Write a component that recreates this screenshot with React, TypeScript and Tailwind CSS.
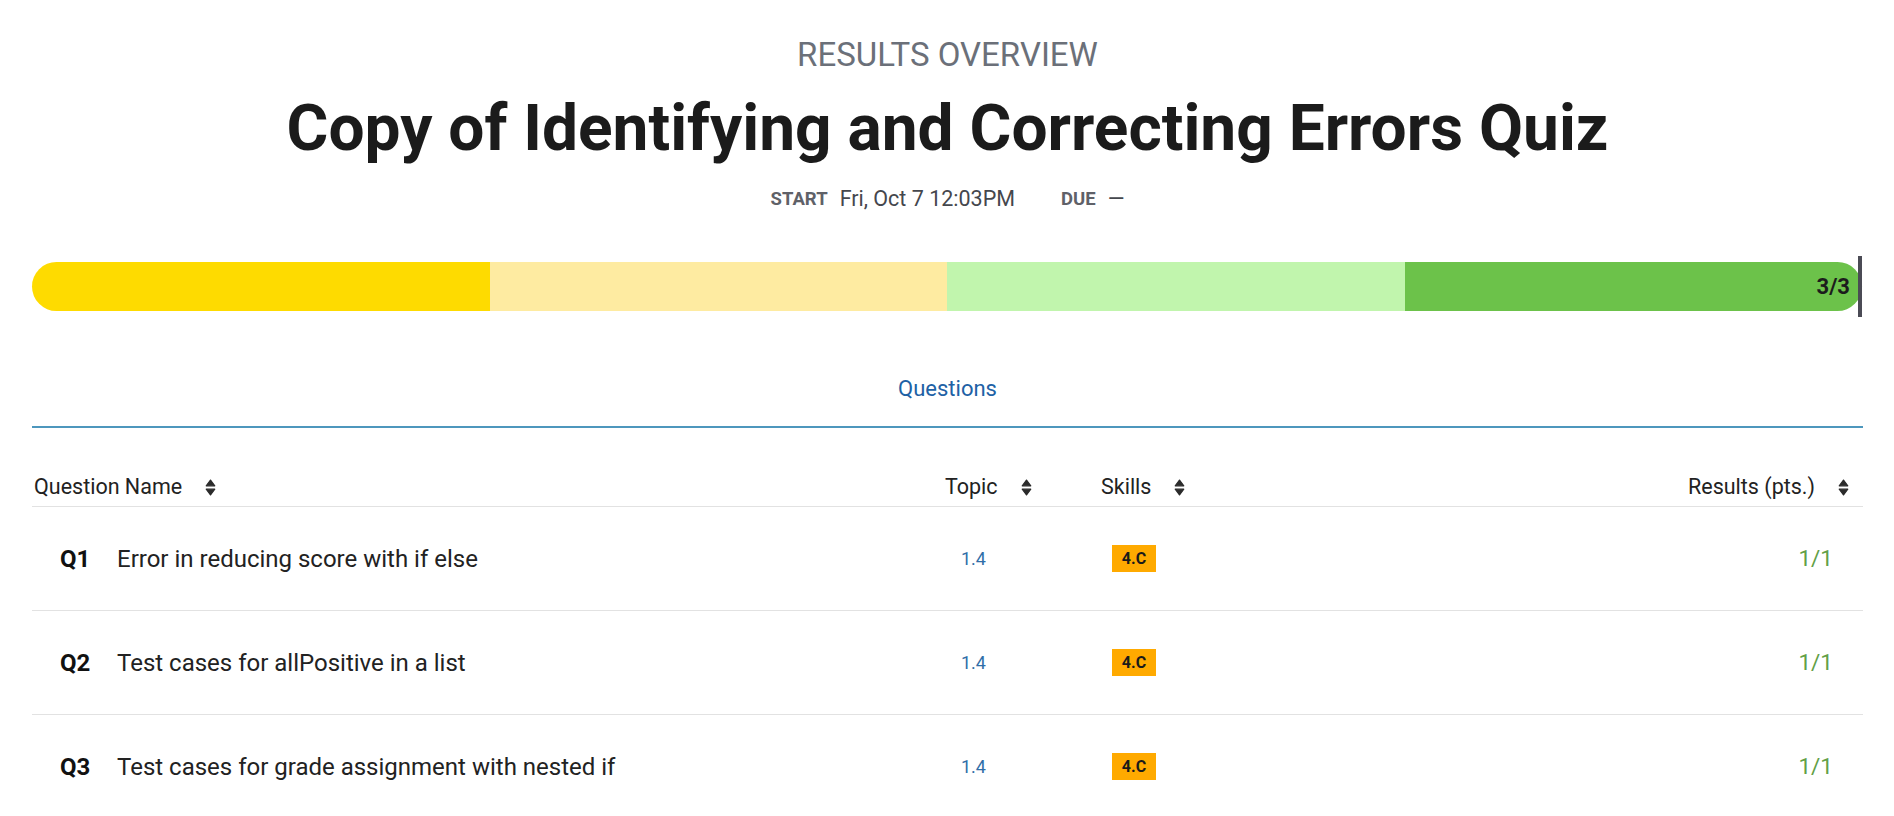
import type { ReactNode } from 'react'

type Row = {
  id: string
  title: string
  topic: string
  skill: string
  result: string
}

const ROWS: Row[] = [
  { id: 'Q1', title: 'Error in reducing score with if else', topic: '1.4', skill: '4.C', result: '1/1' },
  { id: 'Q2', title: 'Test cases for allPositive in a list', topic: '1.4', skill: '4.C', result: '1/1' },
  { id: 'Q3', title: 'Test cases for grade assignment with nested if', topic: '1.4', skill: '4.C', result: '1/1' },
]

const SEGMENTS = ['bg-[#fedb00] rounded-l-full', 'bg-[#feeba1]', 'bg-[#c1f5ad]', 'bg-[#6cc24a] rounded-r-full']

function SortIcon() {
  return (
    <svg viewBox="0 0 10 16" className="h-[17px] w-[11px] text-[#2b2b2b]" fill="currentColor" stroke="currentColor" strokeWidth="1.2" strokeLinejoin="round">
      <path d="M5 1 L9 6.4 H1 Z" />
      <path d="M5 15 L9 9.6 H1 Z" />
    </svg>
  )
}

function HeaderCell({ label, className }: { label: string; className: string }) {
  return (
    <div className={`flex items-center gap-[23px] ${className}`}>
      <span>{label}</span>
      <SortIcon />
    </div>
  )
}

function Cell({ children, className }: { children: ReactNode; className: string }) {
  return <div className={`flex items-center ${className}`}>{children}</div>
}

export default function App() {
  return (
    <main className="min-h-screen bg-white pl-[32px] pr-[31px] font-['Roboto',sans-serif] text-[#222]">
      <header className="flex flex-col items-center">
        <p className="mt-[36px] text-[33px] leading-[38px] text-[#6b7079]">RESULTS OVERVIEW</p>
        <h1 className="mt-[16px] text-[64px] font-bold leading-[78px] text-[#1b1b1b]">
          Copy of Identifying and Correcting Errors Quiz
        </h1>
        <div className="mt-[18px] flex items-center leading-[26px]">
          <span className="text-[18.5px] font-bold text-[#5f6168]">START</span>
          <span className="ml-[12px] text-[21.5px] text-[#45474d]">Fri, Oct 7 12:03PM</span>
          <span className="ml-[46px] text-[18.5px] font-bold text-[#5f6168]">DUE</span>
          <span className="ml-[12px] text-[21.5px] text-[#45474d]">—</span>
        </div>
      </header>

      <div className="relative mt-[50px] pr-[1px]">
        <div className="flex h-[49px]">
          {SEGMENTS.map((seg, i) => (
            <div key={i} className={`flex flex-1 items-center justify-end ${seg}`}>
              {i === SEGMENTS.length - 1 ? (
                <span className="pr-[12px] text-[22px] font-bold text-[#1c1c1c]">3/3</span>
              ) : null}
            </div>
          ))}
        </div>
        <div className="absolute right-[1px] top-[-6px] h-[61px] w-[4px] bg-[#4b4b55]" />
      </div>

      <div className="mt-[64px] flex justify-center border-b-2 border-[#4d97bd] pb-[23px]">
        <span className="text-[22px] leading-[28px] text-[#2061a5]">Questions</span>
      </div>

      <div className="grid grid-cols-[898px_160px_210px_1fr] border-b border-[#e2e2e2] pb-[5px] pt-[45px] text-[21.5px] leading-[28px] text-[#222]">
        <HeaderCell label="Question Name" className="pl-[2px]" />
        <HeaderCell label="Topic" className="pl-[15px]" />
        <HeaderCell label="Skills" className="pl-[11px]" />
        <HeaderCell label="Results (pts.)" className="justify-end pr-[14px]" />
      </div>

      {ROWS.map((row) => (
        <div key={row.id} className="grid h-[104px] grid-cols-[898px_160px_210px_1fr] border-b border-[#e2e2e2]">
          <Cell className="pl-[28px]">
            <span className="w-[57px] text-[24px] font-bold text-[#111]">{row.id}</span>
            <span className="text-[24px] text-[#222]">{row.title}</span>
          </Cell>
          <Cell className="pl-[31px]">
            <span className="text-[18px] text-[#2f6ea8]">{row.topic}</span>
          </Cell>
          <Cell className="pl-[22px]">
            <span className="flex h-[27px] w-[44px] items-center justify-center bg-[#ffaa00] text-[16px] font-bold text-[#1a1a1a]">
              {row.skill}
            </span>
          </Cell>
          <Cell className="justify-end pr-[30px]">
            <span className="text-[22.5px] text-[#62a046]">{row.result}</span>
          </Cell>
        </div>
      ))}
    </main>
  )
}
